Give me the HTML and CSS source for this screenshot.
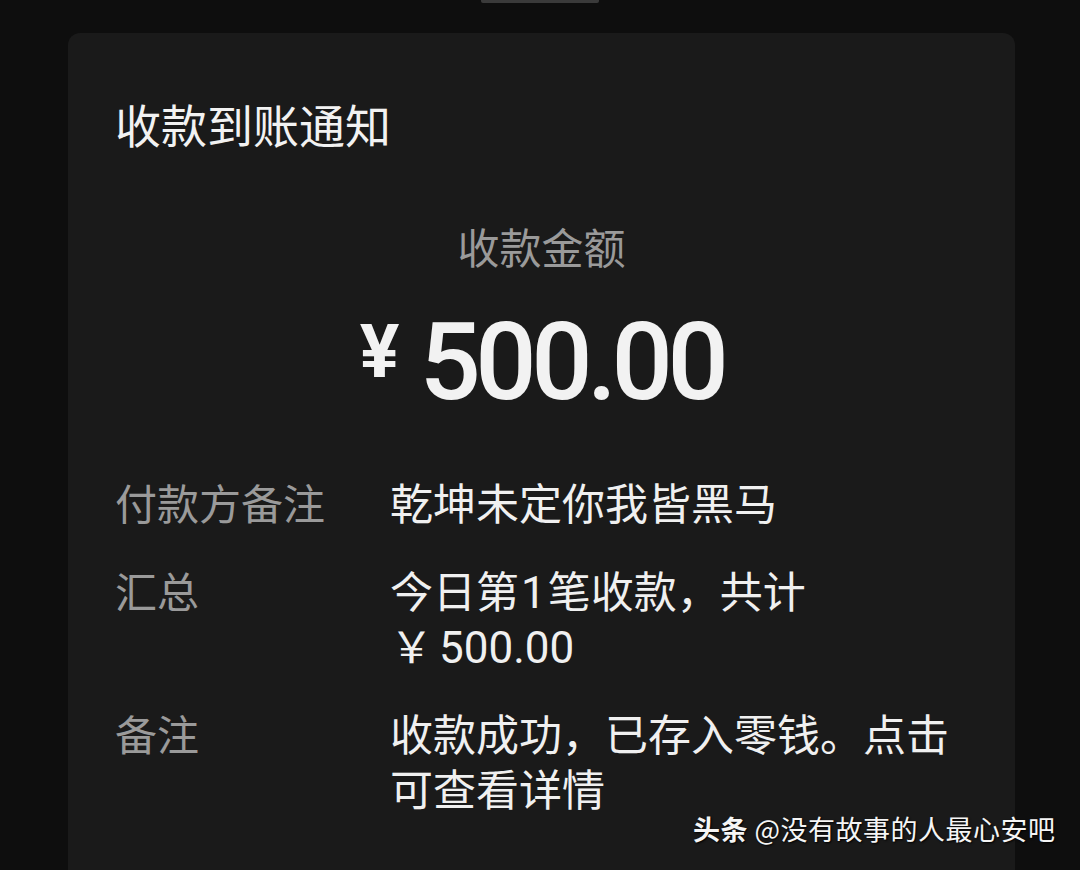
FILE: index.html
```html
<!DOCTYPE html>
<html lang="zh-CN">
<head>
  <meta charset="UTF-8">
  <title>收款到账通知</title>
  <link rel="stylesheet" href="styles.css">
</head>
<body>
  <div class="notch"></div>

  <div class="card">
    <h2 class="title">收款到账通知</h2>

    <div class="amount-label">收款金额</div>
    <div class="amount"><span class="yen">¥</span>500.00</div>

    <!-- detail rows -->
    <div class="rows">
      <div class="row">
        <div class="key">付款方备注</div>
        <div class="val">乾坤未定你我皆黑马</div>
      </div>
      <div class="row">
        <div class="key">汇总</div>
        <div class="val">今日第<span class="num">1</span>笔收款，共计<br>￥<span class="num sum">500.00</span></div>
      </div>
      <div class="row">
        <div class="key">备注</div>
        <div class="val">收款成功，已存入零钱。点击<br>可查看详情</div>
      </div>
    </div>
  </div>

  <div class="watermark"><b>头条</b> @没有故事的人最心安吧</div>
</body>
</html>
```

FILE: styles.css
```css
body {
  margin: 0;
  height: 870px;
  overflow: hidden;
  background-color: #0e0e0e;
  font-family: "Noto Sans CJK SC", "Noto Sans", sans-serif;
  position: relative;
}
.notch {
  width: 118px;
  height: 3px;
  margin: 0 auto;
  background: #3a3a3a;
  border-radius: 0 0 2px 2px;
}
.card {
  margin: 30px 0 0 68px;
  width: 947px;
  height: 860px;
  box-sizing: border-box;
  padding: 67px 47px 0;
  background: #1a1a1a;
  border-radius: 12px;
}
.title {
  margin: 0;
  font-size: 46px;
  font-weight: normal;
  color: #f2f2f2;
  line-height: 1;
}
.amount-label {
  margin-top: 79px;
  text-align: center;
  font-size: 42px;
  color: #9a9a9a;
  line-height: 1;
}
.amount {
  margin-top: 41px;
  text-align: center;
  font-family: Roboto, "Liberation Sans", sans-serif;
  font-size: 108px;
  font-weight: 500;
  letter-spacing: -5.5px;
  color: #f2f2f2;
  line-height: 1;
}
.yen {
  font-size: 74px;
  font-weight: bold;
  margin-right: 20px;
  vertical-align: 22px;
  letter-spacing: 0;
}
.rows {
  margin-top: 58px;
}
.row {
  display: flex;
  margin-bottom: 33px;
}
.key {
  width: 275px;
  font-size: 42px;
  color: #9a9a9a;
  line-height: 55px;
}
.val {
  font-size: 43px;
  color: #f0f0f0;
  line-height: 55px;
}
.num {
  font-family: Roboto, "Liberation Sans", sans-serif;
  font-size: 44px;
  line-height: 1;
  margin: 0 2px;
}
.sum {
  margin-left: 6px;
}
.watermark {
  position: absolute;
  left: 693px;
  top: 809px;
  font-size: 27px;
  letter-spacing: 0.5px;
  color: #f5f5f5;
  text-shadow: 1px 1px 2px #000;
}
.watermark b {
  font-weight: bold;
}
```
